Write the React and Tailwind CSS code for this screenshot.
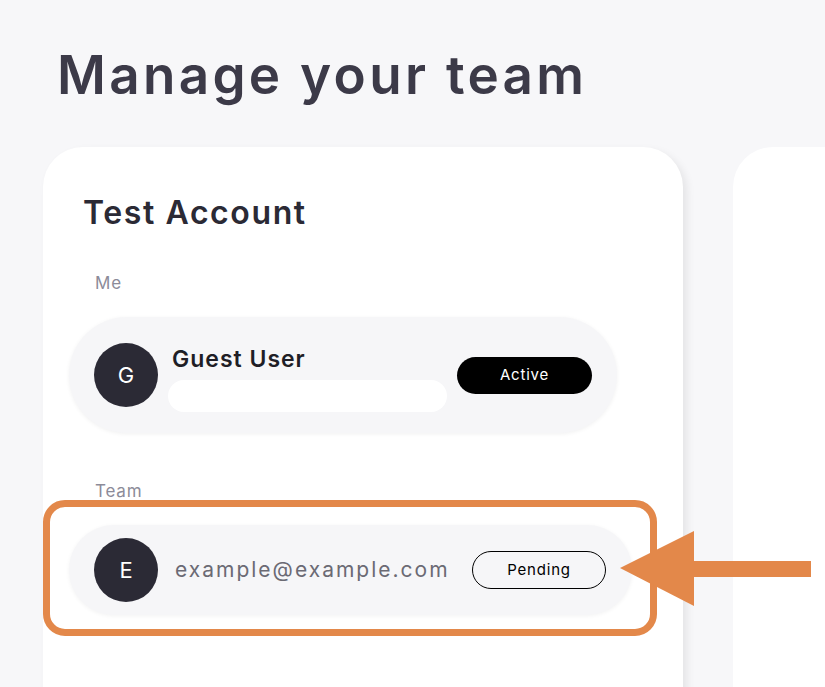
import React from "react";

const Avatar = ({ letter }) => (
  <div className="flex h-16 w-16 shrink-0 items-center justify-center rounded-full bg-[#2b2a35] text-[22px] text-white">
    {letter}
  </div>
);

const App = () => {
  return (
    <div className="relative h-[687px] overflow-hidden bg-[#f7f7f9] font-['Inter',sans-serif]">
      <h1 className="pl-[57px] pt-[49px] text-[53px] font-semibold leading-none tracking-[3.3px] text-[#3c3a48]">
        Manage your team
      </h1>

      <div className="mt-[45px] flex gap-[50px] pl-[43px]">
        {/* Account card */}
        <div className="h-[600px] w-[640px] shrink-0 rounded-[40px] bg-white pt-[50px] shadow-[4px_4px_8px_rgba(0,0,0,0.08)]">
          <h2 className="pl-[40px] text-[32px] font-semibold leading-none tracking-[1.6px] text-[#2b2a35]">
            Test Account
          </h2>

          <p className="mt-[46px] pl-[52px] text-[17px] leading-none tracking-[0.8px] text-[#8c8b99]">Me</p>

          <div className="ml-[26px] mt-[25px] flex h-[116px] w-[548px] items-center rounded-full bg-[#f6f6f8] pl-[25px] pr-[25px] shadow-[0_1px_4px_rgba(0,0,0,0.06)]">
            <Avatar letter="G" />
            <div className="ml-[10px] flex flex-1 flex-col pt-[8px]">
              <span className="pl-[4px] text-[23px] font-semibold leading-[26px] tracking-[1px] text-[#1f1e26]">
                Guest User
              </span>
              <div className="mt-[8px] h-[32px] w-[279px] rounded-full bg-white" />
            </div>
            <span className="flex h-[37px] w-[135px] items-center justify-center rounded-full bg-black text-[15px] tracking-[0.8px] text-white">
              Active
            </span>
          </div>

          <p className="mt-[50px] pl-[52px] text-[17px] leading-none tracking-[0.8px] text-[#8c8b99]">Team</p>

          {/* Highlighted team member */}
          <div className="w-[614px] rounded-[22px] border-[7px] border-[#e3884a] pb-[14px] pl-[19px] pr-[18px] pt-[18px]">
            <div className="flex h-[90px] items-center rounded-full bg-[#f6f6f8] pl-[25px] pr-[26px] shadow-[0_1px_4px_rgba(0,0,0,0.05)]">
              <Avatar letter="E" />
              <span className="ml-[17px] flex-1 text-[21px] tracking-[2px] text-[#6b6a74]">example@example.com</span>
              <span className="flex h-[38px] w-[134px] items-center justify-center rounded-full border border-black text-[15px] tracking-[0.8px] text-black">
                Pending
              </span>
            </div>
          </div>
        </div>

        {/* Next card, cut off */}
        <div className="h-[600px] flex-1 rounded-tl-[40px] bg-white" />
      </div>

      {/* Annotation arrow */}
      <svg className="absolute left-[618px] top-[528px]" width="196" height="82" viewBox="0 0 196 82">
        <polygon points="2,40 76,3 76,78" fill="#e3884a" />
        <rect x="74" y="33" width="119" height="16" fill="#e3884a" />
      </svg>
    </div>
  );
};

export default App;
